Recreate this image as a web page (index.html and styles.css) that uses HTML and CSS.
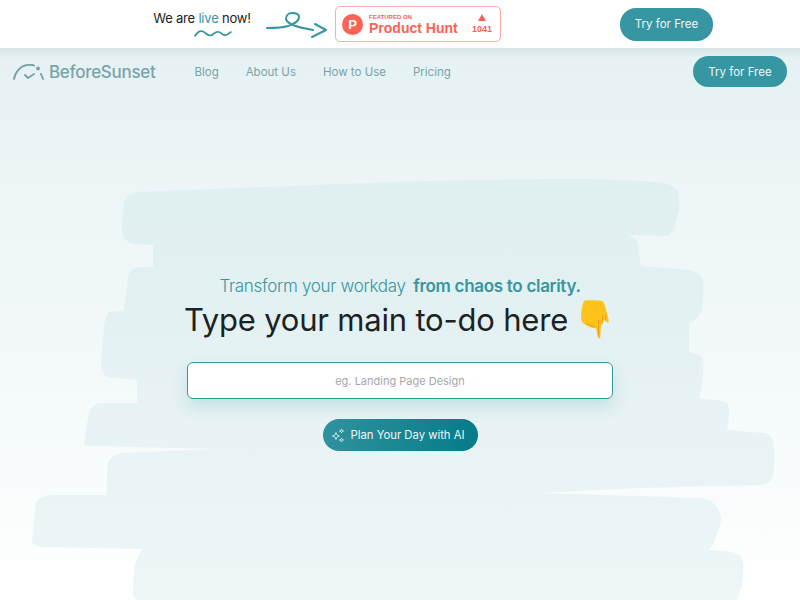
FILE: index.html
```html
<!DOCTYPE html>
<html lang="en">
<head>
    <meta charset="UTF-8">
    <meta name="viewport" content="width=device-width, initial-scale=1.0">
    <title>BeforeSunset</title>
    <link rel="stylesheet" href="styles.css">
</head>
<body>
    <div class="promo">
        <div class="promo-live">
            <span>We are <em>live</em> now!</span>
            <svg class="squiggle" width="38" height="11" viewBox="0 0 38 11" fill="none">
                <path d="M1 8C4 3 7 2 10 4S15 9 18 7 22 3 25 4 29 8 32 7 36 4 37 4" stroke="#3696a1" stroke-width="1.7" stroke-linecap="round"/>
            </svg>
        </div>
        <svg class="promo-arrow" width="62" height="28" viewBox="0 0 62 28" fill="none">
            <path d="M1 17C8 17 16 17 22 15 27 13 33 11 33 6 33 3 29 2 26 2 22 2 20 5 20 8 21 13 30 16 47 19M49 13L60 19 46 26" stroke="#3696a1" stroke-width="2" stroke-linecap="round" stroke-linejoin="round"/>
        </svg>
        <a class="ph-badge" href="#">
            <span class="ph-logo">P</span>
            <span class="ph-text">
                <span class="ph-small">FEATURED ON</span>
                <span class="ph-name">Product Hunt</span>
            </span>
            <span class="ph-votes">
                <span class="ph-triangle"></span>
                <span>1041</span>
            </span>
        </a>
        <a class="btn promo-btn" href="#">Try for Free</a>
    </div>

    <div class="page">
        <svg class="scribble" width="800" height="552" viewBox="0 48 800 552">
            <defs>
                <linearGradient id="scribbleFill" x1="0" y1="0" x2="0" y2="1">
                    <stop offset="0" stop-color="#e0eff0"/>
                    <stop offset="0.5" stop-color="#e6f2f4"/>
                    <stop offset="1" stop-color="#eef6f7"/>
                </linearGradient>
            </defs>
            <path fill="url(#scribbleFill)" d="M124 203C126 197 130 192 138 192L367 183 459 180 561 179C600 179 640 180 663 183 675 186 679 190 679 197 680 205 679 208 678 213 676 225 673 232 668 236L628 235C634 237 637 240 638 245L641 266 689 270C698 272 702 275 703 280 704 290 703 300 702 310 700 316 695 320 689 323L689 352C696 353 702 355 703 360 704 375 702 388 699 398L722 401C727 402 729 404 729 410 729 418 728 424 727 430L765 433C771 435 774 440 774 447 775 458 774 468 773 477 771 482 766 485 760 485L640 488 541 493 700 498C712 500 719 505 721 517 721 523 720 528 717 533 715 540 713 546 709 550 722 551 734 551 740 555 743 560 744 566 743 573 743 583 740 592 737 600L138 600C134 598 133 596 133 593L134 570C135 562 138 555 143 549L41 547C35 546 32 544 32 540L36 503C38 498 44 495 51 495L106 495 108 463C110 457 115 454 122 453L214 449 133 447 92 446C87 446 84 445 84 442L89 413C92 406 96 403 102 403L137 403 137 380 107 377C103 374 101 369 101 363L104 327C105 318 107 313 110 312L124 310 128 277C130 271 133 268 138 267L153 267 153 245 133 244C127 242 123 238 122 233 122 222 123 212 124 203Z"/>
        </svg>

        <nav class="navbar">
            <a class="logo" href="#">
                <svg width="31" height="16" viewBox="0 0 31 16" fill="none">
                    <path d="M1 15C2 8 8 1.500 14 1 17 .5 19 .5 21 1.500" stroke="#7ba4a9" stroke-width="1.900" stroke-linecap="round"/>
                    <path d="M12 11L15 14 21 10" stroke="#7ba4a9" stroke-width="1.900" stroke-linecap="round" stroke-linejoin="round"/>
                    <circle cx="25" cy="4.500" r="2" fill="#7ba4a9"/>
                    <path d="M28 10L30 15" stroke="#7ba4a9" stroke-width="1.900" stroke-linecap="round"/>
                </svg>
                <span>BeforeSunset</span>
            </a>
            <div class="nav-links">
                <a href="#">Blog</a>
                <a href="#">About Us</a>
                <a href="#">How to Use</a>
                <a href="#">Pricing</a>
            </div>
            <a class="btn" href="#">Try for Free</a>
        </nav>

        <main class="hero">
            <p class="tagline">Transform your workday <strong>from chaos to clarity.</strong></p>
            <h1>Type your main to-do here
                <svg class="hand" width="30" height="39" viewBox="0 0 30 39">
                    <path fill="#ffc21d" d="M3.300 0.500C8 0 17 0 21.700 1 24 4 26 13 27.700 20 28 22 27 23 26 22L23.300 20 20 25 19.300 37C19 39 17 38.500 16.700 36.500L15 28.300C12 28.300 10 27.500 8.300 26.700 4 25 0 22 0 18.300 0 12 1 5 3.300 0.500Z"/>
                    <path fill="none" stroke="#ef9f0a" stroke-width="1" stroke-linecap="round" d="M17.500 36V20M21 24L22 15M24 20L25 15M6 24L14 27"/>
                </svg>
            </h1>
            <form class="todo-form">
                <input class="todo-input" type="text" placeholder="eg. Landing Page Design">
                <button class="plan-btn" type="button">
                    <svg width="15" height="15" viewBox="0 0 15 15" fill="none" stroke="#e6f3f4" stroke-width="0.900" stroke-linejoin="round">
                        <path d="M5 4.500C5.300 6.500 6.500 7.700 8.500 8 6.500 8.300 5.300 9.500 5 11.500 4.700 9.500 3.500 8.300 1.500 8 3.500 7.700 4.700 6.500 5 4.500Z"/>
                        <path d="M10.500 1C10.700 2.200 11.300 2.800 12.500 3 11.300 3.200 10.700 3.800 10.500 5 10.300 3.800 9.700 3.200 8.500 3 9.700 2.800 10.300 2.200 10.500 1Z"/>
                        <path d="M10.500 10C10.700 11.200 11.300 11.800 12.500 12 11.300 12.200 10.700 12.800 10.500 14 10.300 12.800 9.700 12.200 8.500 12 9.700 11.800 10.300 11.200 10.500 10Z"/>
                    </svg>
                    Plan Your Day with AI
                </button>
            </form>
        </main>
    </div>
</body>
</html>
```

FILE: styles.css
```css
* {
    box-sizing: border-box;
}

html, body {
    height: 100%;
}

body {
    margin: 0;
    overflow: hidden;
    font-family: 'Inter', 'Noto Sans', sans-serif;
    background: #fff;
    color: #1b2224;
}

a {
    text-decoration: none;
    color: inherit;
}

.btn {
    display: inline-flex;
    align-items: center;
    justify-content: center;
    width: 94px;
    height: 32px;
    border-radius: 16px;
    background: #3696a1;
    color: #eef7f8;
    font-size: 11.500px;
}

/* top promo bar */
.promo {
    position: relative;
    z-index: 2;
    display: flex;
    align-items: center;
    height: 48px;
    padding-left: 153px;
    background: #fff;
}

.promo-live {
    display: flex;
    flex-direction: column;
    align-items: center;
    width: 98px;
    font-size: 13px;
    letter-spacing: -0.2px;
    white-space: nowrap;
}

.promo-live em {
    font-style: normal;
    color: #3696a1;
}

.squiggle {
    margin-top: 2px;
    margin-left: 22px;
}

.promo-arrow {
    margin-left: 15px;
    margin-top: 2px;
}

.ph-badge {
    display: flex;
    align-items: center;
    width: 166px;
    height: 36px;
    margin-left: 7px;
    padding: 0 8px 0 6px;
    border: 1px solid #ffaea5;
    border-radius: 5px;
    background: #fff;
    color: #ff6154;
    font-family: 'Liberation Sans', sans-serif;
}

.ph-logo {
    display: flex;
    align-items: center;
    justify-content: center;
    width: 21px;
    height: 21px;
    border-radius: 50%;
    background: #ff6154;
    color: #fff;
    font-size: 13px;
    font-weight: 700;
}

.ph-text {
    display: flex;
    flex-direction: column;
    margin-left: 6px;
    padding-top: 1px;
}

.ph-small {
    font-size: 6px;
    font-weight: 700;
    line-height: 7px;
}

.ph-name {
    font-size: 14px;
    font-weight: 700;
    line-height: 15px;
}

.ph-votes {
    display: flex;
    flex-direction: column;
    align-items: center;
    gap: 3px;
    margin-left: auto;
    font-size: 9px;
    font-weight: 700;
}

.ph-triangle {
    width: 0;
    height: 0;
    border-left: 4px solid transparent;
    border-right: 4px solid transparent;
    border-bottom: 7px solid #ff6154;
}

.promo-btn {
    width: 93px;
    height: 33px;
    margin-left: 119px;
}

/* page below the promo bar */
.page {
    position: relative;
    height: 552px;
    overflow: hidden;
    background: linear-gradient(180deg, #e5f1f3 0%, #edf5f6 25%, #f5fafa 65%, #fff 100%);
}

.page::before {
    content: "";
    position: absolute;
    top: 0;
    left: 0;
    right: 0;
    height: 10px;
    background: linear-gradient(180deg, rgba(120, 150, 150, 0.14), rgba(120, 150, 150, 0));
}

.scribble {
    position: absolute;
    top: 0;
    left: 0;
}

.navbar {
    position: relative;
    display: flex;
    align-items: center;
    height: 31px;
    margin-top: 8px;
    padding: 0 13px;
}

.logo {
    display: flex;
    align-items: center;
    gap: 5px;
    color: #7ba4a9;
    font-size: 17px;
    font-weight: 500;
    letter-spacing: -0.3px;
}

.nav-links {
    display: flex;
    gap: 27px;
    margin-left: 39px;
    color: #7ba4a9;
    font-size: 11.500px;
}

.navbar .btn {
    height: 31px;
    margin-left: auto;
}

.hero {
    position: relative;
    display: flex;
    flex-direction: column;
    align-items: center;
    padding-top: 187px;
}

.tagline {
    margin: 0;
    color: #3696a1;
    font-size: 17px;
    font-weight: 300;
    letter-spacing: -0.3px;
    line-height: 24px;
}

.tagline strong {
    margin-left: 3px;
    font-weight: 600;
}

h1 {
    display: flex;
    align-items: center;
    gap: 13px;
    height: 46px;
    margin: -2px 0 0;
    font-size: 31px;
    font-weight: 400;
    letter-spacing: -0.2px;
    white-space: nowrap;
}

.hand {
    margin-right: 5px;
}

.todo-form {
    display: flex;
    flex-direction: column;
    align-items: center;
}

.todo-input {
    width: 426px;
    height: 37px;
    margin-top: 20px;
    border: 1.500px solid #3696a1;
    border-radius: 6px;
    background: #fff;
    box-shadow: 0 8px 16px rgba(54, 150, 161, 0.2);
    font-family: inherit;
    font-size: 11px;
    text-align: center;
    outline: none;
}

.todo-input::placeholder {
    color: #a6a8a9;
}

.plan-btn {
    display: flex;
    align-items: center;
    gap: 5px;
    width: 155px;
    height: 32px;
    margin-top: 20px;
    padding: 0 0 0 8px;
    border: none;
    border-radius: 16px;
    background: linear-gradient(90deg, #2f929e, #047c88);
    color: #eef7f8;
    font-family: inherit;
    font-size: 11.300px;
    cursor: pointer;
}
```
